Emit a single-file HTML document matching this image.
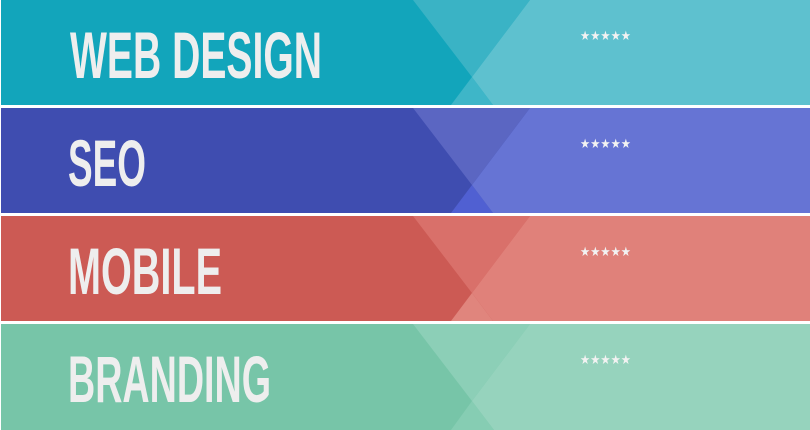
<!DOCTYPE html>
<html><head><meta charset="utf-8"><style>
html,body{margin:0;padding:0;background:#fff;width:810px;height:430px;overflow:hidden}
svg{display:block}
</style></head><body>
<svg width="810" height="430" viewBox="0 0 810 430" xmlns="http://www.w3.org/2000/svg">
<rect x="0" y="0" width="810" height="430" fill="#fff"/>
<g>
<rect x="1" y="0" width="809" height="105" fill="#12a5bb"/>
<polygon points="413,0 530,0 472,77" fill="#3ab3c5"/>
<polygon points="451,105 493,105 472,77" fill="#3eb6c8"/>
<polygon points="530,0 810,0 810,105 493,105 472,77" fill="#5ec1cf"/>
<text x="70" y="78" font-family="Liberation Sans, sans-serif" font-weight="bold" font-size="66" fill="#eeeeee" textLength="252" lengthAdjust="spacingAndGlyphs">WEB DESIGN</text>
<text x="580" y="40" font-family="DejaVu Sans, sans-serif" font-weight="bold" font-size="13" fill="#f2f2f2" textLength="51" lengthAdjust="spacingAndGlyphs">★★★★★</text>
</g>
<g transform="translate(0,108)">
<rect x="1" y="0" width="809" height="105" fill="#3f4db0"/>
<polygon points="413,0 530,0 472,77" fill="#5b66c2"/>
<polygon points="451,105 493,105 472,77" fill="#5060d2"/>
<polygon points="530,0 810,0 810,105 493,105 472,77" fill="#6674d4"/>
<text x="68" y="78" font-family="Liberation Sans, sans-serif" font-weight="bold" font-size="66" fill="#eeeeee" textLength="78" lengthAdjust="spacingAndGlyphs">SEO</text>
<text x="580" y="40" font-family="DejaVu Sans, sans-serif" font-weight="bold" font-size="13" fill="#f2f2f2" textLength="51" lengthAdjust="spacingAndGlyphs">★★★★★</text>
</g>
<g transform="translate(0,216)">
<rect x="1" y="0" width="809" height="105" fill="#cc5a54"/>
<polygon points="413,0 530,0 472,77" fill="#d9706a"/>
<polygon points="451,105 493,105 472,77" fill="#e0857d"/>
<polygon points="530,0 810,0 810,105 493,105 472,77" fill="#e0817a"/>
<text x="68" y="78" font-family="Liberation Sans, sans-serif" font-weight="bold" font-size="66" fill="#eeeeee" textLength="154" lengthAdjust="spacingAndGlyphs">MOBILE</text>
<text x="580" y="40" font-family="DejaVu Sans, sans-serif" font-weight="bold" font-size="13" fill="#f2f2f2" textLength="51" lengthAdjust="spacingAndGlyphs">★★★★★</text>
</g>
<g transform="translate(0,324)">
<rect x="1" y="0" width="809" height="106" fill="#77c5a8"/>
<polygon points="413,0 530,0 472,77" fill="#8ccfb7"/>
<polygon points="451,106 494,106 472,77" fill="#86cdb3"/>
<polygon points="530,0 810,0 810,106 494,106 472,77" fill="#96d3bd"/>
<text x="68" y="78" font-family="Liberation Sans, sans-serif" font-weight="bold" font-size="66" fill="#eeeeee" textLength="203" lengthAdjust="spacingAndGlyphs">BRANDING</text>
<text x="580" y="40" font-family="DejaVu Sans, sans-serif" font-weight="bold" font-size="13" fill="#f2f2f2" textLength="51" lengthAdjust="spacingAndGlyphs">★★★★★</text>
</g>
</svg>
</body></html>
